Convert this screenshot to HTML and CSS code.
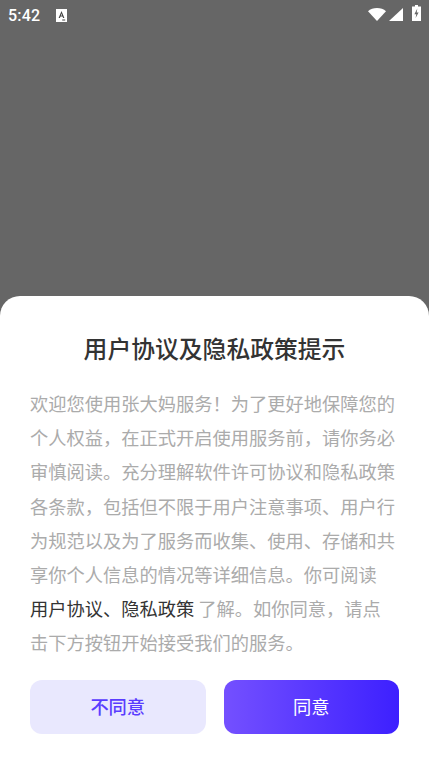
FILE: index.html
```html
<!DOCTYPE html>
<html lang="zh-CN">
<head>
<meta charset="utf-8">
<title>用户协议及隐私政策提示</title>
<link rel="stylesheet" href="styles.css">
</head>
<body>
<div class="screen">
  <header class="status">
    <div class="status-left">
      <span class="time">5:42</span>
      <svg class="note" viewBox="0 0 11 13"><path fill="#fff" d="M0 0h11v13H0z"/><path fill="#444" d="M5.5 2 8.4 9H7.1l-.6-1.5H4.5L3.9 9H2.6zM4.9 6.4h1.2L5.5 4.6zM6.2 10.4h3v1h-3z"/></svg>
    </div>
    <div class="status-right">
      <svg class="wifi" viewBox="0 0 18 13"><path fill="#fff" d="M0 3.2C2.3 1.2 5.5 0 9 0s6.7 1.2 9 3.2L9 13z"/></svg>
      <svg class="signal" viewBox="0 0 14 13"><path fill="#fff" d="M14 0v13H0z"/></svg>
      <svg class="battery" viewBox="0 0 9 16"><path fill="#fff" d="M3 0h3v1.4h3V16H0V1.4h3z"/><path fill="#666" d="M5.3 3.4 2.4 9.2h1.9l-.7 3.8 3-5.6H4.7z"/></svg>
    </div>
  </header>
  <section class="sheet">
    <h1 class="title">用户协议及隐私政策提示</h1>
    <p class="body">欢迎您使用张大妈服务！为了更好地保障您的个人权益，在正式开启使用服务前，请你务必审慎阅读。充分理解软件许可协议和隐私政策各条款，包括但不限于用户注意事项、用户行为规范以及为了服务而收集、使用、存储和共享你个人信息的情况等详细信息。你可阅读<a class="link">用户协议、隐私政策</a> 了解。如你同意，请点击下方按钮开始接受我们的服务。</p>
    <div class="actions">
      <button class="btn btn-decline">不同意</button>
      <button class="btn btn-accept">同意</button>
    </div>
  </section>
</div>
</body>
</html>
```
FILE: styles.css
```css
* { box-sizing: border-box; }
html, body { margin: 0; padding: 0; }
body { font-family: "Noto Sans CJK SC", "Noto Sans", sans-serif; }
.screen {
  width: 429px;
  height: 764px;
  display: flex;
  flex-direction: column;
  justify-content: space-between;
  background: #666;
  overflow: hidden;
}
.status {
  height: 30px;
  display: flex;
  justify-content: space-between;
  align-items: center;
  padding: 0 8px 0 8px;
}
.status-left { display: flex; align-items: center; }
.status-right {
  display: flex;
  align-items: flex-end;
  padding-bottom: 4px;
}
.time {
  font-family: Roboto, sans-serif;
  font-size: 16px;
  font-weight: 500;
  color: #fff;
  letter-spacing: 0.2px;
}
.note { width: 11px; height: 13px; margin-left: 16px; }
.wifi { width: 18px; height: 13px; }
.signal { width: 14px; height: 13px; margin-left: 3px; }
.battery { width: 9px; height: 16px; margin-left: 9px; }
.sheet {
  height: 468px;
  background: #fff;
  border-radius: 20px 20px 0 0;
  padding: 35px 30px 0;
}
.title {
  margin: 0;
  text-align: center;
  font-size: 23.8px;
  line-height: 34px;
  font-weight: 500;
  color: #333;
}
.body {
  margin: 21px 0 0;
  width: 369px;
  font-size: 18.25px;
  line-height: 34.2px;
  color: #ababab;
}
.link { color: #333; white-space: nowrap; }
.actions {
  display: flex;
  gap: 18px;
  margin-top: 20px;
}
.btn {
  flex: 1;
  height: 54px;
  border: 0;
  border-radius: 12px;
  font-family: inherit;
  font-size: 18.25px;
  padding: 0 0 2px;
}
.btn-decline { background: #e9e8fe; color: #5a3cff; font-weight: 500; }
.btn-accept {
  background: linear-gradient(90deg, #7450ff, #3d20ff);
  color: #fff;
}
```
